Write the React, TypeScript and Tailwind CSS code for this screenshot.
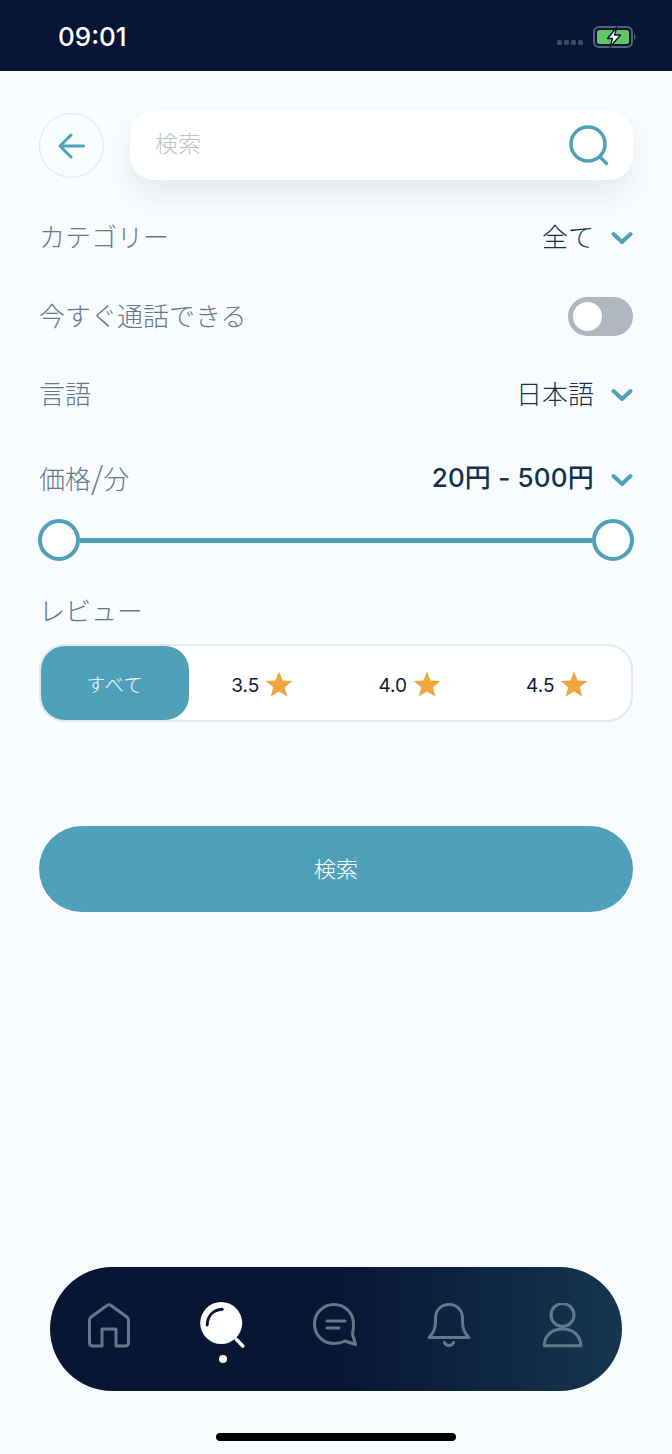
import type { ReactNode } from "react";

const jp = "font-['Noto_Sans_CJK_JP','Noto_Sans',sans-serif]";
const inter = "font-['Inter','Noto_Sans_CJK_JP',sans-serif]";

function Chevron() {
  return (
    <svg width="22" height="14" viewBox="0 0 22 14" fill="none" className="shrink-0 mt-[2px]">
      <path d="M2.5 3 L11 11 L19.5 3" stroke="#4fa1b9" strokeWidth="4" strokeLinecap="round" strokeLinejoin="round" />
    </svg>
  );
}

function Star() {
  return (
    <svg width="28" height="26" viewBox="0 0 28 26" className="shrink-0">
      <path d="M14 0.5 L17.6 9.6 L27.4 10.1 L19.8 16.3 L22.3 25.6 L14 20.4 L5.7 25.6 L8.2 16.3 L0.6 10.1 L10.4 9.6 Z" fill="#f0a63c" />
    </svg>
  );
}

function Battery() {
  return (
    <svg width="44" height="24" viewBox="0 0 44 24" fill="none" className="mt-[3px]">
      <rect x="1" y="2" width="38" height="20" rx="5" stroke="#56607a" strokeWidth="2" />
      <rect x="4" y="5" width="32" height="14" rx="2.5" fill="#65c466" />
      <path d="M41 9 C43 10 43 14 41 15 Z" fill="#56607a" />
      <path d="M24 2 L14.5 13.5 H19.5 L17 22 L27.5 10 H21.5 Z" fill="#fff" stroke="#081635" strokeWidth="1.3" strokeLinejoin="round" />
    </svg>
  );
}

function Row({ label, value, bold }: { label: ReactNode; value: string; bold?: boolean }) {
  return (
    <div className="flex items-center justify-between h-10">
      <span className={`${jp} font-light text-[26px] text-[#62798b] pb-[4px]`}>{label}</span>
      <span className="flex items-center gap-[17px]">
        <span className={bold ? `${inter} font-medium text-[26px] tracking-[0.2px] text-[#12314c] pb-[4px]` : `${jp} font-light text-[26px] text-[#12314c] pb-[4px]`}>{value}</span>
        <Chevron />
      </span>
    </div>
  );
}

function Thumb() {
  return <span className="block w-[42px] h-[42px] rounded-full bg-white border-[4px] border-[#4fa1b9] shrink-0" />;
}

function Review({ value }: { value: string }) {
  return (
    <div className="flex items-center justify-center gap-[6px] pt-[2px]">
      <span className={`${inter} text-[19px] text-[#0b1a3a] pt-[4px]`}>{value}</span>
      <Star />
    </div>
  );
}

function NavBar() {
  const stroke = "#62798b";
  return (
    <div className="mx-[50px] h-[124px] rounded-[62px] bg-gradient-to-r from-[#081635] from-50% to-[#15364f] flex justify-between px-[38px] pt-[36px]">
      <svg width="42" height="46" viewBox="0 0 42 46" fill="none">
        <path d="M14 43 H5 Q1.5 43 1.5 39.5 V17 Q1.5 15.5 3 14 L19 2.5 Q21 1 23 2.5 L39 14 Q40.5 15.5 40.5 17 V39.5 Q40.5 43 37 43 H28 V26 H14 Z" stroke={stroke} strokeWidth="3" strokeLinejoin="round" />
      </svg>
      <div className="relative w-[48px] h-[46px]">
        <svg width="48" height="46" viewBox="1 0 48 46" fill="none" className="overflow-visible">
          <circle cx="24.2" cy="20" r="21" fill="#fff" />
          <path d="M39.2 36.3 L45.8 43" stroke="#fff" strokeWidth="3.5" strokeLinecap="round" />
          <path d="M10.2 22 C10.5 13 16 7 25.2 6.3" stroke="#081635" strokeWidth="3" strokeLinecap="round" />
        </svg>
        <span className="absolute left-[21px] top-[52px] w-[8px] h-[8px] rounded-full bg-white" />
      </div>
      <svg width="44" height="44" viewBox="0 0 44 44" fill="none">
        <path d="M21 1.5 C10 1.5 1.5 10 1.5 21 C1.5 32 10 40.5 21 40.5 C25.5 40.5 29 39.5 32 38 L42.5 41.5 L39.5 31 C40.2 28 40.5 25 40.5 21 C40.5 10 32 1.5 21 1.5 Z" stroke={stroke} strokeWidth="3" strokeLinejoin="round" />
        <path d="M14 18 H32 M14 25 H26" stroke={stroke} strokeWidth="3" strokeLinecap="round" />
      </svg>
      <svg width="50" height="44" viewBox="-2 0 50 44" fill="none">
        <path d="M2 34.5 H42 C37 30 35.5 26 35.5 19 V15 C35.5 7 29.5 1.5 22 1.5 C14.5 1.5 8.5 7 8.5 15 V19 C8.5 26 7 30 2 34.5 Z" stroke={stroke} strokeWidth="3" strokeLinejoin="round" />
        <path d="M17.5 39.5 C19 43.5 25 43.5 26.5 39.5" stroke={stroke} strokeWidth="3" strokeLinecap="round" />
      </svg>
      <svg width="42" height="46" viewBox="0 0 42 46" fill="none">
        <circle cx="20.5" cy="12" r="11.5" stroke={stroke} strokeWidth="3" />
        <path d="M2.2 42.8 C2.2 32.5 10 26 20.5 26 C31 26 38.8 32.5 38.8 42.8 Z" stroke={stroke} strokeWidth="3" strokeLinejoin="round" />
      </svg>
    </div>
  );
}

export default function App() {
  return (
    <div className="w-[672px] h-[1454px] bg-[#f8fcff] flex flex-col overflow-hidden">
      <div className="h-[71px] bg-[#081635] flex items-center justify-between pl-[58px] pr-[35px] shrink-0">
        <span className={`${inter} font-medium text-[26px] text-white mt-[2px]`}>09:01</span>
        <div className="flex items-center gap-[10px]">
          <div className="flex gap-[2px] mt-[14px]">
            <span className="w-[5px] h-[5px] rounded-[1.5px] bg-[#3c4a63]" />
            <span className="w-[5px] h-[5px] rounded-[1.5px] bg-[#3c4a63]" />
            <span className="w-[5px] h-[5px] rounded-[1.5px] bg-[#3c4a63]" />
            <span className="w-[5px] h-[5px] rounded-[1.5px] bg-[#3c4a63]" />
          </div>
          <Battery />
        </div>
      </div>

      <div className="px-[39px] pt-[40px] flex-1 flex flex-col">
        <div className="flex items-center gap-[26px]">
          <button className="w-[65px] h-[65px] rounded-full border border-[#dbe6ef] flex items-center justify-center shrink-0">
            <svg width="27" height="26" viewBox="0 0 27 26" fill="none">
              <path d="M25.5 13 H3 M13 2 L2 13 L13 24" stroke="#4fa1b9" strokeWidth="3" strokeLinecap="round" strokeLinejoin="round" />
            </svg>
          </button>
          <div className="flex-1 h-[69px] rounded-[24px] bg-white shadow-[0_16px_32px_rgba(30,60,90,0.09)] flex items-center justify-between pl-[25px] pr-[23px]">
            <span className={`${jp} font-light text-[23px] text-[#bcc2c9] pb-[6px]`}>検索</span>
            <svg width="42" height="42" viewBox="0 0 42 42" fill="none">
              <circle cx="20" cy="19" r="17" stroke="#4fa1b9" strokeWidth="3.5" />
              <path d="M32 32 L38.5 38.5" stroke="#4fa1b9" strokeWidth="3.5" strokeLinecap="round" />
            </svg>
          </div>
        </div>

        <div className="mt-[37px]">
          <Row label="カテゴリー" value="全て" />
        </div>

        <div className="mt-[39px] flex items-center justify-between h-10">
          <span className={`${jp} font-light text-[26px] text-[#62798b] pb-[4px]`}>今すぐ通話できる</span>
          <div className="w-[65px] h-[39px] rounded-full bg-[#b0b7c1] flex items-center pl-[5px]">
            <span className="block w-[29px] h-[29px] rounded-full bg-white" />
          </div>
        </div>

        <div className="mt-[38px]">
          <Row label="言語" value="日本語" />
        </div>

        <div className="mt-[45px]">
          <Row
            label={
              <>
                価格<span className="text-[31px] leading-none">/</span>分
              </>
            }
            value="20円 - 500円"
            bold
          />
        </div>

        <div className="mt-[20px] -mx-[1px] flex items-center">
          <Thumb />
          <div className="flex-1 h-[5px] bg-[#4fa1b9]" />
          <Thumb />
        </div>

        <div className={`${jp} font-light mt-[30px] h-10 flex items-center text-[26px] text-[#62798b] pb-[4px]`}>レビュー</div>

        <div className="mt-[13px] h-[78px] rounded-[26px] border-2 border-[#e2e9f0] bg-white grid grid-cols-4 items-center">
          <div className={`${jp} font-light h-full rounded-[24px] bg-[#4fa1b9] text-white text-[19px] tracking-[0.5px] pt-[2px] flex items-center justify-center`}>すべて</div>
          <Review value="3.5" />
          <Review value="4.0" />
          <Review value="4.5" />
        </div>

        <button className={`${jp} font-light mt-[104px] h-[86px] rounded-[43px] bg-[#4fa1b9] text-white text-[22px] pb-[4px] flex items-center justify-center`}>検索</button>
      </div>

      <NavBar />
      <div className="flex justify-center mt-[42px] mb-[13px]">
        <span className="block w-[240px] h-[8px] rounded-full bg-black" />
      </div>
    </div>
  );
}
